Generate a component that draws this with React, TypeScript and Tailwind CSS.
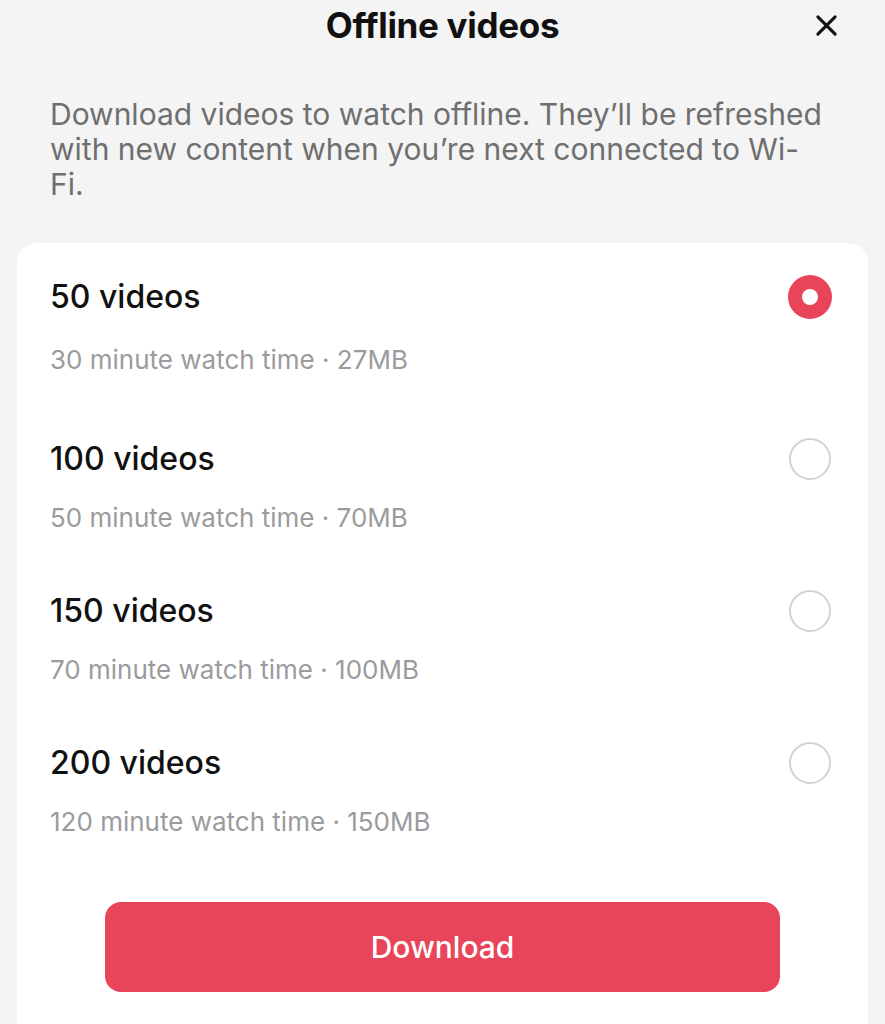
import { useState } from "react";

type Option = {
  count: number;
  minutes: number;
  size: string;
};

const options: Option[] = [
  { count: 50, minutes: 30, size: "27MB" },
  { count: 100, minutes: 50, size: "70MB" },
  { count: 150, minutes: 70, size: "100MB" },
  { count: 200, minutes: 120, size: "150MB" },
];

function Radio({ checked }: { checked: boolean }) {
  if (checked)
    return (
      <span className="block w-[44px] h-[44px] rounded-full bg-[#e8445a] flex items-center justify-center">
        <span className="block w-[16px] h-[16px] rounded-full bg-white" />
      </span>
    );

  return <span className="block w-[42px] h-[42px] rounded-full border-2 border-[#d3d3d3] mx-[1px]" />;
}

export default function App() {
  const [selected, setSelected] = useState(50);

  return (
    <div
      className="w-[885px] h-[1024px] overflow-hidden bg-[#f4f4f4] text-[#111111]"
      style={{ fontFamily: "Inter, 'Noto Sans', sans-serif" }}
    >
      <div className="relative h-[50px] flex items-center justify-center">
        <h1 className="text-[35px] font-bold tracking-[-0.3px]">Offline videos</h1>
        <button className="absolute right-[47px] top-[14px] w-[23px] h-[23px]">
          <svg viewBox="0 0 24 24" className="w-full h-full" fill="none" stroke="#111111" strokeWidth={3.2} strokeLinecap="round">
            <path d="M3 3 L21 21 M21 3 L3 21" />
          </svg>
        </button>
      </div>

      <p className="mt-[47px] w-[780px] ml-[50px] text-[30px] leading-[35px] text-[#6f6f70]">
        Download videos to watch offline. They’ll be refreshed with new content when you’re next connected to Wi-Fi.
      </p>

      <div className="mt-[41px] mx-[17px] bg-white rounded-[20px] pt-[36px] pb-[60px] h-[900px]">
        <div className="flex flex-col gap-[61px]">
          {options.map((o, i) => (
            <div
              key={o.count}
              className={`px-[33px] cursor-pointer ${i === 0 ? "mb-[6px]" : ""}`}
              onClick={() => setSelected(o.count)}
            >
              <div className="flex items-center justify-between h-[36px]">
                <span className="text-[32px] font-medium">{o.count} videos</span>
                <span className="mr-[3px]">
                  <Radio checked={selected === o.count} />
                </span>
              </div>
              <div
                className={`${i === 0 ? "mt-[29px]" : "mt-[25px]"} h-[30px] flex items-center text-[26px] text-[#9b9b9d]`}
              >
                {o.minutes} minute watch time · {o.size}
              </div>
            </div>
          ))}
        </div>

        <div className="mt-[66px] px-[88px]">
          <button className="w-full h-[90px] rounded-[16px] bg-[#e8445a] text-white text-[30px] font-medium">
            Download
          </button>
        </div>
      </div>
    </div>
  );
}
